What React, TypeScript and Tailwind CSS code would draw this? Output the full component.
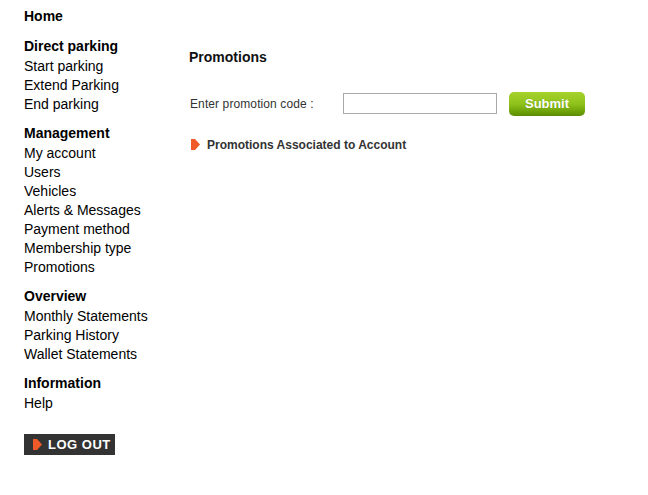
import React from "react";

const Arrow = ({ className }: { className?: string }) => (
  <svg className={className} viewBox="0 0 9 11" width="9" height="11">
    <path d="M0 0 H4 L9 5.5 L4 11 H0 Z" fill="#f05a28" />
  </svg>
);

const Section = ({ title, items }: { title: string; items: string[] }) => (
  <div className="flex flex-col">
    <div className="h-[19px] leading-[19px] font-bold text-[14px] mb-[1px] text-black">{title}</div>
    {items.map((i) => (
      <div key={i} className="h-[19px] leading-[19px] text-[14px] text-black">
        {i}
      </div>
    ))}
  </div>
);

export default function App() {
  return (
    <div
      className="w-[648px] h-[495px] bg-white flex"
      style={{ fontFamily: '"Liberation Sans", Arial, sans-serif' }}
    >
      <div className="w-[189px] pl-[24px] pt-[7px] flex flex-col">
        <div className="h-[19px] leading-[19px] font-bold text-[14px] text-black mb-[11px]">Home</div>
        <div className="flex flex-col gap-[10px]">
          <Section title="Direct parking" items={["Start parking", "Extend Parking", "End parking"]} />
          <Section
            title="Management"
            items={["My account", "Users", "Vehicles", "Alerts & Messages", "Payment method", "Membership type", "Promotions"]}
          />
          <Section title="Overview" items={["Monthly Statements", "Parking History", "Wallet Statements"]} />
          <Section title="Information" items={["Help"]} />
        </div>
        <div className="mt-[21px] w-[91px] h-[21px] bg-[#333333] flex items-center pl-[9px] gap-[6px]">
          <Arrow />
          <span className="text-white font-bold text-[13px] tracking-[0.5px] leading-none">LOG OUT</span>
        </div>
      </div>
      <div className="flex flex-col pt-[48px]">
        <div className="h-[19px] leading-[19px] font-bold text-[14px] text-[#111]">Promotions</div>
        <div className="flex items-center mt-[24px] h-[25px]">
          <span className="text-[12px] text-[#333] w-[154px] pl-[1px] tracking-[0.1px]">Enter promotion code :</span>
          <div className="w-[154px] h-[21px] border border-[#a9a9a9] bg-white" />
          <button
            className="ml-[12px] w-[76px] h-[24px] rounded-[5px] text-white font-bold text-[13px] leading-none"
            style={{
              background: "linear-gradient(#a6d22e 0%, #8fc21a 50%, #6fa30a 80%, #5d8c04 100%)",
              textShadow: "0 0 1px rgba(0,0,0,0.2)",
            }}
          >
            Submit
          </button>
        </div>
        <div className="flex items-center mt-[19px] h-[19px] pl-[2px] gap-[7px]">
          <Arrow />
          <span className="text-[12px] font-bold text-[#333]">Promotions Associated to Account</span>
        </div>
      </div>
    </div>
  );
}
